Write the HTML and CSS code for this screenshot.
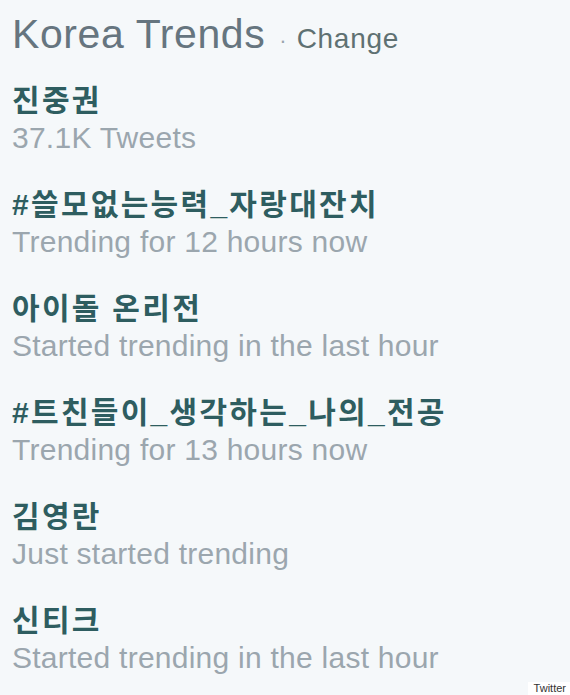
FILE: index.html
```html
<!DOCTYPE html>
<html lang="ko">
<head>
<meta charset="utf-8">
<title>Korea Trends</title>
<link rel="stylesheet" href="styles.css">
</head>
<body>
<div class="module">
  <div class="header">
    <span class="title">Korea Trends</span>
    <span class="sep">·</span>
    <span class="change">Change</span>
  </div>
  <ul class="trends">
    <li class="trend"><span class="name">진중권</span><span class="meta">37.1K Tweets</span></li>
    <li class="trend"><span class="name">#쓸모없는능력_자랑대잔치</span><span class="meta">Trending for 12 hours now</span></li>
    <li class="trend"><span class="name">아이돌 온리전</span><span class="meta">Started trending in the last hour</span></li>
    <li class="trend"><span class="name">#트친들이_생각하는_나의_전공</span><span class="meta">Trending for 13 hours now</span></li>
    <li class="trend"><span class="name">김영란</span><span class="meta">Just started trending</span></li>
    <li class="trend"><span class="name">신티크</span><span class="meta">Started trending in the last hour</span></li>
  </ul>
</div>
<div class="credit">Twitter</div>
</body>
</html>
```
FILE: styles.css
```css
html, body {
  margin: 0;
  padding: 0;
  background: #f5f8fa;
  width: 570px;
  height: 695px;
  overflow: hidden;
}
body {
  position: relative;
  font-family: "Liberation Sans", Arial, "Noto Sans CJK KR", sans-serif;
}
.module {
  padding: 10px 0 0 12px;
}
.header {
  display: flex;
  align-items: baseline;
  height: 48px;
  line-height: 48px;
}
.title {
  font-size: 41px;
  color: #66757f;
  letter-spacing: 0.6px;
}
.sep {
  font-size: 22px;
  color: #9aa5ad;
  margin: 0 10px 0 14px;
}
.change {
  font-size: 28px;
  color: #5f7172;
  letter-spacing: 0.7px;
}
.trends {
  list-style: none;
  margin: 0;
  padding: 0;
  display: flex;
  flex-direction: column;
  gap: 30px;
  margin-top: 24px;
}
.trend {
  display: flex;
  flex-direction: column;
}
.name {
  font-family: "Liberation Sans", "Noto Sans CJK KR", sans-serif;
  font-weight: bold;
  font-size: 30px;
  line-height: 37px;
  height: 37px;
  color: #2e5d60;
  letter-spacing: 2.3px;
}
.meta {
  font-size: 30px;
  line-height: 37px;
  height: 37px;
  color: #9ba6ae;
  letter-spacing: 0.25px;
}
.credit {
  position: absolute;
  right: 0;
  bottom: 0;
  background: #ffffff;
  color: #333333;
  font-size: 11px;
  line-height: 13px;
  padding: 0 4px 0 6px;
}
```
